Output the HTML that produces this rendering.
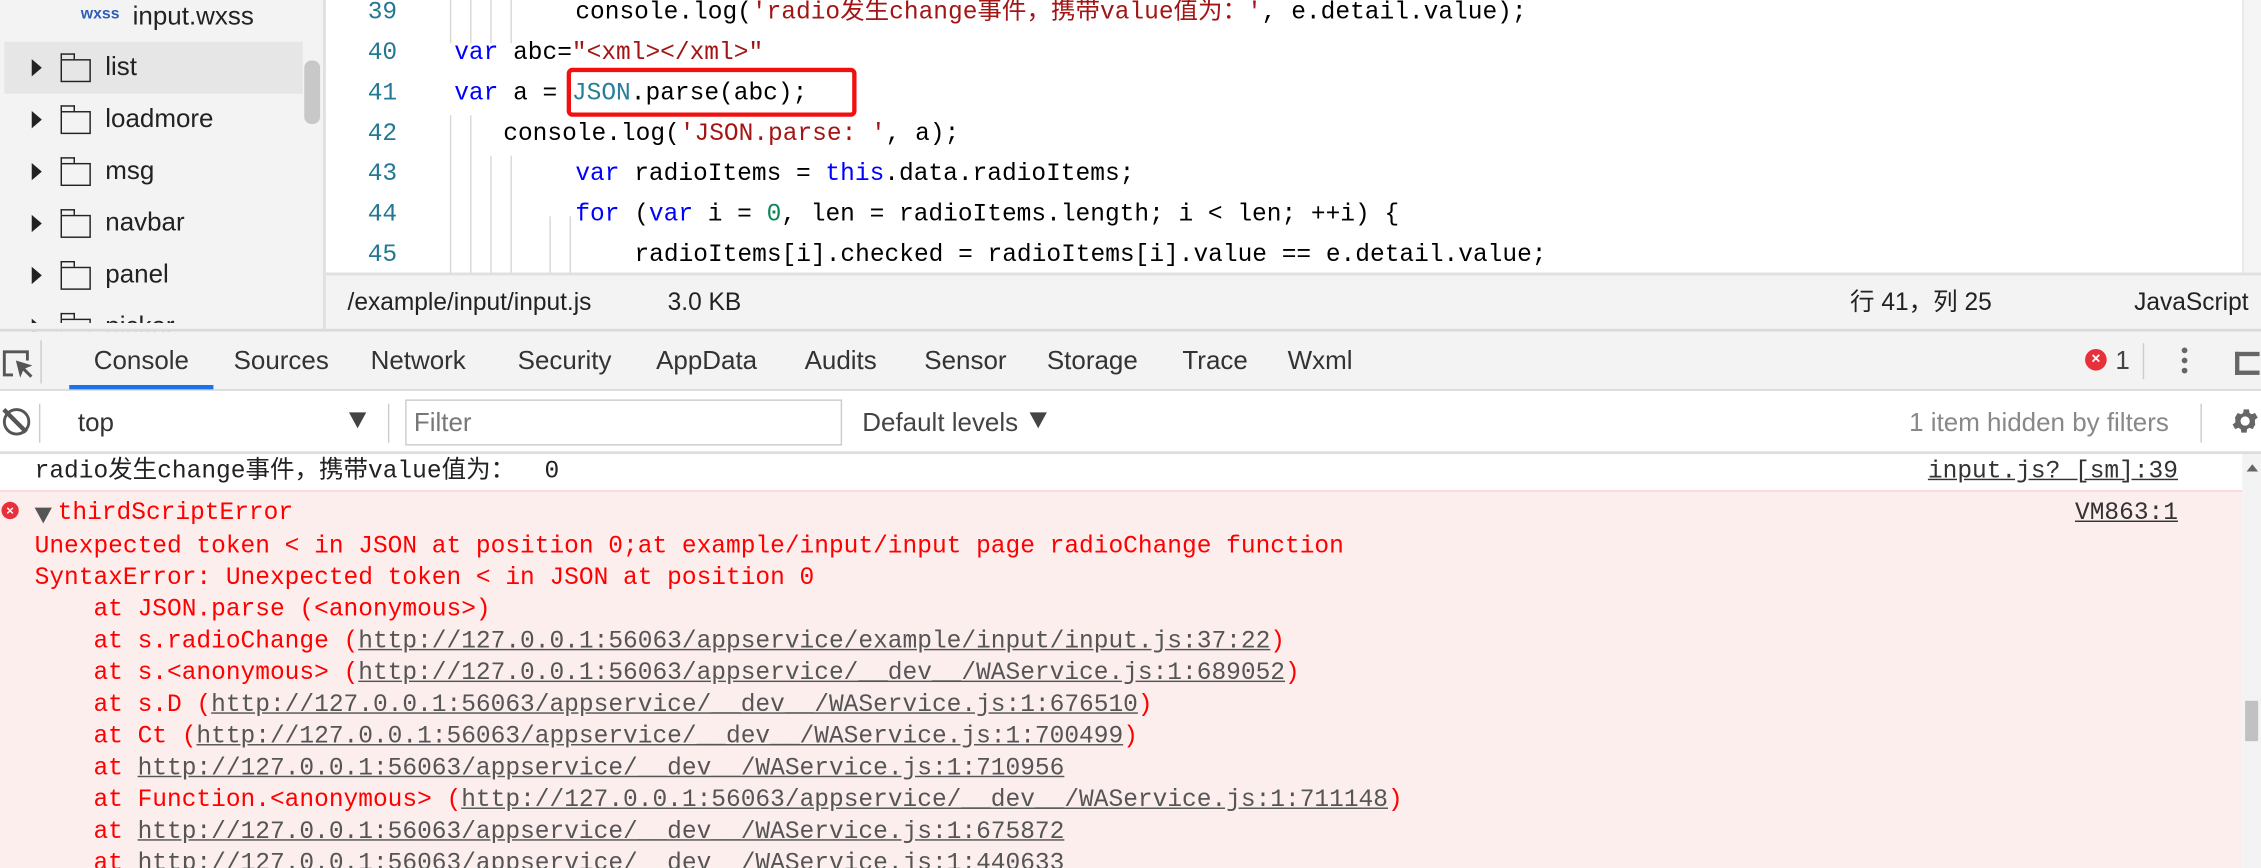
<!DOCTYPE html>
<html><head><meta charset="utf-8"><style>
html,body{margin:0;padding:0;width:2261px;height:867px;overflow:hidden;background:#fff}
#w{position:absolute;left:0;top:0;width:1568px;height:602px;transform:scale(1.44196);transform-origin:0 0;font-family:"Liberation Sans","Noto Sans CJK SC",sans-serif;overflow:hidden}
.a{position:absolute;white-space:pre}
.m{font-family:"Liberation Mono","Noto Sans CJK SC",monospace;font-size:17px;line-height:20px}
.tree{font-size:18px;color:#222}
.arr{position:absolute;width:0;height:0;border-top:6px solid transparent;border-bottom:6px solid transparent;border-left:7px solid #222}
.fold{position:absolute;width:19px;height:14px;border:1.5px solid #222;border-top-width:1.5px}
.fold:before{content:"";position:absolute;left:-1.5px;top:-5px;width:8px;height:3px;border:1.5px solid #222;border-bottom:none}
.ln{color:#237893}
.kw{color:#0000ff}
.st{color:#a31515}
.nm{color:#098658}
.cl{color:#267f99}
.g{position:absolute;width:1px;background:#d8d8d8}
.tab{font-size:18px;color:#333}
.r{color:#ff0000}
.u{color:#555;text-decoration:underline}
.sb{font-size:17px;color:#222;line-height:20px}
</style></head><body><div id="w">
<div class="a" style="left:0;top:0;width:224px;height:228px;background:#f3f3f3"></div>
<div class="a" style="top:29px;left:3px;width:207px;height:36px;background:#e6e6e6"></div>
<div class="a" style="left:211px;top:42px;width:11px;height:44px;background:#c8c8c8;border-radius:5px"></div>
<div class="a" style="left:224px;top:0;width:2px;height:228px;background:#e0e0e0"></div>
<div class="a" style="left:56px;top:4px;font-size:11px;color:#2f5eb8;font-weight:bold">wxss</div>
<div class="a tree" style="left:92px;top:1px">input.wxss</div>
<div class="arr" style="left:22px;top:41px"></div><div class="fold" style="left:42px;top:41px"></div><div class="a tree" style="left:73px;top:36px">list</div>
<div class="arr" style="left:22px;top:77px"></div><div class="fold" style="left:42px;top:77px"></div><div class="a tree" style="left:73px;top:72px">loadmore</div>
<div class="arr" style="left:22px;top:113px"></div><div class="fold" style="left:42px;top:113px"></div><div class="a tree" style="left:73px;top:108px">msg</div>
<div class="arr" style="left:22px;top:149px"></div><div class="fold" style="left:42px;top:149px"></div><div class="a tree" style="left:73px;top:144px">navbar</div>
<div class="arr" style="left:22px;top:185px"></div><div class="fold" style="left:42px;top:185px"></div><div class="a tree" style="left:73px;top:180px">panel</div>
<div class="arr" style="left:22px;top:221px"></div><div class="fold" style="left:42px;top:221px"></div><div class="a tree" style="left:73px;top:216px">picker</div>
<div class="a" style="left:0;top:224px;width:224px;height:6px;background:#f3f3f3"></div>
<div class="a" style="left:1555px;top:0;width:13px;height:190px;background:#f5f5f5;border-left:1px solid #e5e5e5"></div>
<div class="g" style="left:312px;top:0;height:30px"></div><div class="g" style="left:326px;top:0;height:30px"></div><div class="g" style="left:340px;top:0;height:30px"></div><div class="g" style="left:354px;top:0;height:30px"></div>
<div class="g" style="left:312px;top:80px;height:110px"></div><div class="g" style="left:326px;top:80px;height:110px"></div>
<div class="g" style="left:340px;top:108px;height:82px"></div><div class="g" style="left:354px;top:108px;height:82px"></div>
<div class="g" style="left:381px;top:150px;height:40px"></div><div class="g" style="left:395px;top:150px;height:40px"></div>
<div class="a m ln" style="left:255px;top:0px">39</div>
<div class="a m ln" style="left:255px;top:28px">40</div>
<div class="a m ln" style="left:255px;top:56px">41</div>
<div class="a m ln" style="left:255px;top:84px">42</div>
<div class="a m ln" style="left:255px;top:112px">43</div>
<div class="a m ln" style="left:255px;top:140px">44</div>
<div class="a m ln" style="left:255px;top:168px">45</div>
<div class="a m" style="left:399px;top:0px">console.log(<span class="st">'radio发生change事件，携带value值为：'</span>, e.detail.value);</div>
<div class="a m" style="left:315px;top:28px"><span class="kw">var</span> abc=<span class="st">"&lt;xml&gt;&lt;/xml&gt;"</span></div>
<div class="a m" style="left:315px;top:56px"><span class="kw">var</span> a = <span class="cl">JSON</span>.parse(abc);</div>
<div class="a m" style="left:349px;top:84px">console.log(<span class="st">'JSON.parse: '</span>, a);</div>
<div class="a m" style="left:399px;top:112px"><span class="kw">var</span> radioItems = <span class="kw">this</span>.data.radioItems;</div>
<div class="a m" style="left:399px;top:140px"><span class="kw">for</span> (<span class="kw">var</span> i = <span class="nm">0</span>, len = radioItems.length; i &lt; len; ++i) {</div>
<div class="a m" style="left:440px;top:168px">radioItems[i].checked = radioItems[i].value == e.detail.value;</div>
<div class="a" style="left:393px;top:47px;width:195px;height:28px;border:3px solid #f01010;border-radius:4px"></div>
<div class="a" style="left:226px;top:189px;width:1342px;height:39px;background:#f3f3f3;border-top:2px solid #e0e0e0"></div>
<div class="a sb" style="left:241px;top:200px">/example/input/input.js</div>
<div class="a sb" style="left:463px;top:200px">3.0 KB</div>
<div class="a sb" style="left:1283px;top:200px">行 41，列 25</div>
<div class="a sb" style="left:1480px;top:200px">JavaScript</div>
<div class="a" style="left:0;top:228px;width:1568px;height:2px;background:#dadada"></div>
<div class="a" style="left:0;top:230px;width:1568px;height:40px;background:#f3f3f3;border-bottom:1px solid #d0d0d0"></div>
<svg class="a" style="left:0;top:240px" width="24" height="24" viewBox="0 0 24 24"><path d="M9 20H3V4h16v6" fill="none" stroke="#555" stroke-width="2"/><path d="M11 10l3 12 2-5 5 5 1.5-1.5-5-5 5-2z" fill="#555"/></svg>
<div class="a" style="left:28px;top:236px;width:1px;height:30px;background:#ccc"></div>
<div class="a tab" style="left:65px;top:240px">Console</div>
<div class="a" style="left:48px;top:267px;width:100px;height:3px;background:#1a73e8"></div>
<div class="a tab" style="left:162px;top:240px">Sources</div>
<div class="a tab" style="left:257px;top:240px">Network</div>
<div class="a tab" style="left:359px;top:240px">Security</div>
<div class="a tab" style="left:455px;top:240px">AppData</div>
<div class="a tab" style="left:558px;top:240px">Audits</div>
<div class="a tab" style="left:641px;top:240px">Sensor</div>
<div class="a tab" style="left:726px;top:240px">Storage</div>
<div class="a tab" style="left:820px;top:240px">Trace</div>
<div class="a tab" style="left:893px;top:240px">Wxml</div>
<div class="a" style="left:1446px;top:242px;width:15px;height:15px;border-radius:50%;background:#e8303a;color:#fff;font-size:11px;line-height:15px;text-align:center;font-weight:bold">×</div>
<div class="a tab" style="left:1467px;top:240px;color:#444">1</div>
<div class="a" style="left:1486px;top:238px;width:1px;height:25px;background:#ccc"></div>
<div class="a" style="left:1513px;top:241px;width:4px;height:4px;border-radius:50%;background:#666;box-shadow:0 7px 0 #666,0 14px 0 #666"></div>
<div class="a" style="left:1550px;top:244px;width:14px;height:10px;border:3px solid #666;border-right:none"></div>
<div class="a" style="left:0;top:271px;width:1568px;height:42px;background:#fff;border-bottom:2px solid #ddd"></div>
<div class="a" style="left:2px;top:283px;width:15px;height:15px;border:2.5px solid #555;border-radius:50%"></div>
<div class="a" style="left:9px;top:281px;width:2.5px;height:22px;background:#555;transform:rotate(-45deg)"></div>
<div class="a" style="left:27px;top:280px;width:1px;height:27px;background:#ccc"></div>
<div class="a" style="left:54px;top:283px;font-size:18px;color:#333">top</div>
<div class="a" style="left:242px;top:286px;border-left:6px solid transparent;border-right:6px solid transparent;border-top:11px solid #444"></div>
<div class="a" style="left:269px;top:280px;width:1px;height:27px;background:#ccc"></div>
<div class="a" style="left:281px;top:277px;width:301px;height:30px;border:1.5px solid #ccc"></div>
<div class="a" style="left:287px;top:283px;font-size:18px;color:#777">Filter</div>
<div class="a" style="left:598px;top:283px;font-size:18px;color:#444">Default levels</div>
<div class="a" style="left:714px;top:286px;border-left:6px solid transparent;border-right:6px solid transparent;border-top:11px solid #444"></div>
<div class="a" style="left:1324px;top:283px;font-size:18px;color:#888">1 item hidden by filters</div>
<div class="a" style="left:1526px;top:280px;width:1px;height:27px;background:#ccc"></div>
<svg class="a" style="left:1546px;top:281px" width="22" height="22" viewBox="0 0 24 24"><path fill="#666" d="M19.4 13a7.5 7.5 0 000-2l2.1-1.6-2-3.5-2.5 1a7 7 0 00-1.7-1l-.4-2.7h-4l-.4 2.7a7 7 0 00-1.7 1l-2.5-1-2 3.5L4.6 11a7.5 7.5 0 000 2l-2.1 1.6 2 3.5 2.5-1a7 7 0 001.7 1l.4 2.7h4l.4-2.7a7 7 0 001.7-1l2.5 1 2-3.5zM12 15.5a3.5 3.5 0 110-7 3.5 3.5 0 010 7z"/></svg>
<div class="a" style="left:0;top:315px;width:1555px;height:25px;background:#fff;border-bottom:1px solid #f6d0d0"></div>
<div class="a m" style="left:24px;top:318px;color:#222">radio发生change事件，携带value值为：  0</div>
<div class="a m u" style="left:1337px;top:318px;color:#333">input.js? [sm]:39</div>
<div class="a" style="left:0;top:341px;width:1555px;height:261px;background:#fdeeee"></div>
<div class="a" style="left:1555px;top:315px;width:13px;height:287px;background:#f3f3f3"></div>
<div class="a" style="left:1557px;top:486px;width:9px;height:28px;background:#c1c1c1"></div>
<div class="a" style="left:1558px;top:322px;border-left:4px solid transparent;border-right:4px solid transparent;border-bottom:5px solid #666"></div>
<div class="a" style="left:1px;top:348px;width:12px;height:12px;border-radius:50%;background:#e8303a;color:#fff;font-size:9px;line-height:12px;text-align:center;font-weight:bold">×</div>
<div class="a" style="left:24px;top:352px;border-left:6px solid transparent;border-right:6px solid transparent;border-top:11px solid #555"></div>
<div class="a m r" style="left:40px;top:347px">thirdScriptError</div>
<div class="a m u" style="left:1439px;top:347px;color:#333">VM863:1</div>
<div class="a m r" style="left:24px;top:369px;line-height:22px">Unexpected token &lt; in JSON at position 0;at example/input/input page radioChange function
SyntaxError: Unexpected token &lt; in JSON at position 0
    at JSON.parse (&lt;anonymous&gt;)
    at s.radioChange (<span class="u">http://127.0.0.1:56063/appservice/example/input/input.js:37:22</span>)
    at s.&lt;anonymous&gt; (<span class="u">http://127.0.0.1:56063/appservice/__dev__/WAService.js:1:689052</span>)
    at s.D (<span class="u">http://127.0.0.1:56063/appservice/__dev__/WAService.js:1:676510</span>)
    at Ct (<span class="u">http://127.0.0.1:56063/appservice/__dev__/WAService.js:1:700499</span>)
    at <span class="u">http://127.0.0.1:56063/appservice/__dev__/WAService.js:1:710956</span>
    at Function.&lt;anonymous&gt; (<span class="u">http://127.0.0.1:56063/appservice/__dev__/WAService.js:1:711148</span>)
    at <span class="u">http://127.0.0.1:56063/appservice/__dev__/WAService.js:1:675872</span>
    at <span class="u">http://127.0.0.1:56063/appservice/__dev__/WAService.js:1:440633</span></div>
</div></body></html>
